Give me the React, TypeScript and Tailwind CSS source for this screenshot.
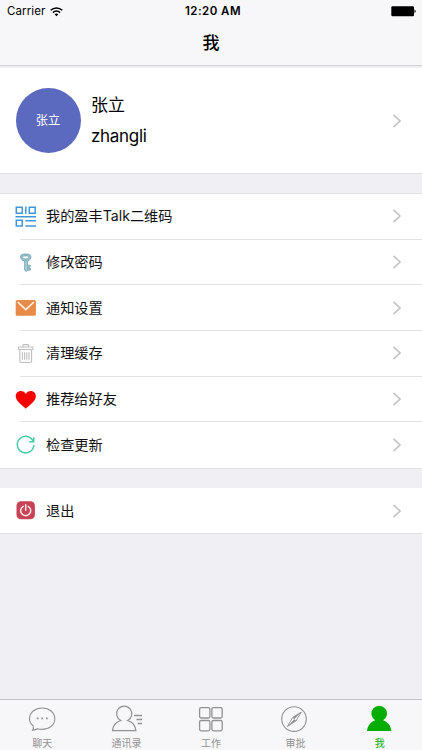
import React from 'react';

interface RowProps {
  icon: React.ReactNode;
  label: string;
  last?: boolean;
}

const Chevron = () => (
  <svg width="10" height="16" viewBox="0 0 10 16" fill="none" stroke="#c4c4c9" strokeWidth="1.7">
    <path d="M1.5 1.9 8 8l-6.5 6.1" />
  </svg>
);

const QrIcon = () => (
  <svg width="22" height="22" viewBox="0 0 22 22" fill="none" stroke="#3f97de" strokeWidth="1.5">
    <path d="M1.3 1.3h5.900v5.900H1.300zM14.300 1.300h5.900v5.900h-5.900zM1.300 14.200h5.900v5.900H1.300zM10.800.5v7.300M.5 10.700h20.500M10.300 14.700h10.700M10.300 20h10.700" />
  </svg>
);

const KeyIcon = () => (
  <svg width="22" height="22" viewBox="0 0 22 22" fill="none">
    <path d="M5.500 4.200C5.800 2.400 8 2 10.700 2s4.900.5 5.200 2.200c.3 2-1.200 4.500-3.400 5v9.100l-1.300 1.300-1.600-1.500V9.200C7 8.700 5.200 6.200 5.500 4.200Z" fill="#8fbfce" stroke="#779fad" strokeWidth=".8" />
    <path d="M7.500 4.700c.6-1 5.800-1 6.400 0 .2 1-1 2.100-1.900 2.100H9.400c-.9 0-2.100-1.100-1.900-2.100Z" fill="#f2fafc" stroke="#779fad" strokeWidth=".6" />
    <path d="M12.500 13.200h2.700v1.600h-1v1.400h1.300v2h-3" fill="#8fbfce" stroke="#779fad" strokeWidth=".7" />
    <path d="M11 9.500v8.500" stroke="#c1dfe7" strokeWidth=".8" />
  </svg>
);

const MailIcon = () => (
  <svg width="22" height="22" viewBox="0 0 22 22" fill="none">
    <rect x=".7" y="3" width="20.200" height="15.800" rx="1.500" fill="#e98b48" />
    <path d="m2.700 5 8.100 7.600L18.900 5" stroke="#fff5eb" strokeWidth="1.500" />
  </svg>
);

const TrashIcon = () => (
  <svg width="22" height="22" viewBox="0 0 22 22" fill="none" stroke="#bfbfbf" strokeWidth="1.100">
    <path d="M4.800 6.500v11.400c0 1 .7 1.600 1.600 1.600h8.600c1 0 1.600-.6 1.600-1.600V6.500M7.400 9.200v7.600M9.600 9.200v7.600M11.800 9.200v7.600M14 9.200v7.600" />
    <rect x="3.500" y="4" width="14.500" height="2.500" rx=".6" />
    <path d="M8 3.800V2.300c0-.4.200-.7.600-.7h4.200c.4 0 .7.300.7.700v1.500" />
  </svg>
);

const HeartIcon = () => (
  <svg width="22" height="22" viewBox="0 0 22 22">
    <path d="M10.800 19.800C9.300 17.400.7 12.900.7 7.200c0-3 2.200-5.300 5-5.300 2.300 0 4.200 1.100 5.100 3.100.9-2 2.800-3.100 5.100-3.100 2.800 0 5 2.300 5 5.300 0 5.700-8.600 10.200-10.100 12.600Z" fill="#f60000" />
  </svg>
);

const RefreshIcon = () => (
  <svg width="22" height="22" viewBox="0 0 22 22" fill="none" stroke="#45cba5" strokeWidth="1.500">
    <path d="M18.200 7.200A8.300 8.300 0 1 0 18.900 11" />
    <path d="M18.700 3.200v4.500h-4.500" />
  </svg>
);

const PowerIcon = () => (
  <svg width="22" height="22" viewBox="0 0 22 22" fill="none">
    <rect x="1.500" y="1.300" width="18.400" height="17.900" rx="4.500" fill="#c74355" />
    <path d="M8.200 6.300a5 5 0 1 0 5 0M10.700 4.700v5.500" stroke="#fde8eb" strokeWidth="1.500" strokeLinecap="round" />
  </svg>
);

const Row = ({ icon, label, last }: RowProps) => (
  <div className="flex h-[45.7px] items-stretch">
    <div className="flex w-[20px] shrink-0 items-center pl-[15px]">
      <div className="shrink-0">{icon}</div>
    </div>
    <div className={`flex flex-1 items-center justify-between pl-[26px] pr-[20px] ${last ? '' : 'border-b border-[#e3e3e6]'}`}>
      <span className="text-[14.2px] leading-5 tracking-[-0.02px] text-[#111]">{label}</span>
      <Chevron />
    </div>
  </div>
);

const rows = [
  { icon: <QrIcon />, label: '我的盈丰Talk二维码' },
  { icon: <KeyIcon />, label: '修改密码' },
  { icon: <MailIcon />, label: '通知设置' },
  { icon: <TrashIcon />, label: '清理缓存' },
  { icon: <HeartIcon />, label: '推荐给好友' },
  { icon: <RefreshIcon />, label: '检查更新' },
];

const ChatIcon = () => (
  <svg width="32" height="28" viewBox="0 0 32 28" fill="none" stroke="currentColor" strokeWidth="1.100">
    <path d="M7.200 20.800C4.800 19 3.500 16.500 3.500 13.700 3.500 7.500 9.200 3 16.200 3S28.800 7.500 28.800 13.700s-5.600 10.700-12.600 10.700c-1.800 0-3.500-.2-5-.7-1.400.8-2.800 1.500-4.600 1.600.8-1.100 1-2.600.6-4.500Z" />
    <path d="M10.700 12.500h1.800v1.800h-1.800zM15.300 12.500h1.800v1.800h-1.800zM19.900 12.500h1.800v1.800h-1.800z" fill="currentColor" stroke="none" />
  </svg>
);

const ContactsIcon = () => (
  <svg width="32" height="28" viewBox="0 0 32 28" fill="none" stroke="currentColor" strokeWidth="1.200">
    <path d="M9.800 15.500a7.600 7.600 0 1 1 6.800 0c4.500 1.300 7.800 4.700 8.300 10.100H1.500c.5-5.400 3.800-8.800 8.300-10.100Z" />
    <path d="M23 10.400h8M25.500 14.500H31M26.700 18.500H31" strokeWidth="1.500" />
  </svg>
);

const WorkIcon = () => (
  <svg width="32" height="28" viewBox="0 0 32 28" fill="none" stroke="currentColor" strokeWidth="1.300">
    <rect x="4.600" y="2.700" width="10.300" height="10.300" rx="1.500" />
    <rect x="16.900" y="2.700" width="10.300" height="10.300" rx="1.500" />
    <rect x="4.600" y="15.500" width="10.300" height="10.300" rx="1.500" />
    <rect x="16.900" y="15.500" width="10.300" height="10.300" rx="1.500" />
  </svg>
);

const CompassIcon = () => (
  <svg width="32" height="28" viewBox="0 0 32 28" fill="none" stroke="currentColor" strokeWidth="1.100">
    <circle cx="15" cy="14.100" r="12.300" />
    <path d="m22.300 7-5.200 8.800-8.700 5.700 5.200-9Z" strokeWidth=".9" />
    <path d="m22.300 7-8.700 5.500 1.700 1.700ZM8.400 21.500l6.900-7.300 1.800 1.600Z" fill="currentColor" stroke="none" />
  </svg>
);

const MeIcon = () => (
  <svg width="32" height="28" viewBox="0 0 32 28">
    <path d="M11.300 15.300A7.800 7.800 0 1 1 19.100 15.300c4.700 1.600 7.700 5.200 8.300 10.800H3c.6-5.600 3.600-9.200 8.300-10.800Z" fill="currentColor" />
  </svg>
);

const tabs = [
  { icon: <ChatIcon />, label: '聊天' },
  { icon: <ContactsIcon />, label: '通讯录' },
  { icon: <WorkIcon />, label: '工作' },
  { icon: <CompassIcon />, label: '审批' },
  { icon: <MeIcon />, label: '我', active: true },
];

export default function App() {
  return (
    <div className="flex h-[750px] w-[422px] flex-col overflow-hidden bg-[#efeff4] font-[Inter,'Noto_Sans_CJK_SC',sans-serif] text-black">
      <header className="h-[66px] shrink-0 border-b border-[#cfcfd4] bg-[#f7f7f9]">
        <div className="grid h-[22px] grid-cols-3 items-center pl-[7px] pr-[6px] text-[11.5px]">
          <div className="flex items-center gap-[5px] pt-px">
            <span className="tracking-[0.1px]">Carrier</span>
            <svg width="13" height="10" viewBox="0 0 13 10" fill="none" stroke="#000" strokeWidth="1.500">
              <path d="M.7 3.200c3.300-3.100 8.300-3.100 11.600 0M2.900 5.600c2.100-2 5.100-2 7.200 0" />
              <path d="M4.600 7.300c1.200-1 2.600-1 3.800 0L6.500 9.200Z" fill="#000" stroke="none" />
            </svg>
          </div>
          <span className="pt-px pl-[3px] text-center font-semibold whitespace-nowrap tracking-[0.45px]">12:20 AM</span>
          <svg className="justify-self-end" width="25" height="11" viewBox="0 0 25 11">
            <rect x=".3" y=".2" width="22.700" height="10" rx="1.200" fill="#000" />
            <path d="M23.500 3.600c1.600.4 1.600 3 0 3.400Z" fill="#000" />
          </svg>
        </div>
        <h1 className="text-center text-[17px] font-medium leading-[43px]">我</h1>
      </header>

      <section className="mt-[2px] flex h-[106px] shrink-0 items-center border-b border-[#e1e1e6] bg-white pl-[15.5px] pr-[20px]">
        <div className="flex size-[65px] shrink-0 items-center justify-center rounded-full bg-[#5b6abf] pt-[2px] text-[12.2px] text-white">张立</div>
        <div className="ml-[10.5px] flex-1 text-[17px] leading-[31px]">
          <p>张立</p>
          <p className="tracking-[-0.3px]">zhangli</p>
        </div>
        <Chevron />
      </section>

      <section className="mt-[19px] shrink-0 border-t border-[#e1e1e6] bg-white">
        {rows.map((row, i) => (
          <Row key={row.label} icon={row.icon} label={row.label} last={i === rows.length - 1} />
        ))}
      </section>

      <section className="mt-[-0.2px] shrink-0 border-t border-[#e1e1e6] pt-[19px]">
        <div className="h-[46px] border-b border-[#e1e1e6] bg-white">
          <Row icon={<PowerIcon />} label="退出" last />
        </div>
      </section>

      <nav className="mt-auto grid h-[51px] shrink-0 grid-cols-5 border-t border-[#c3c3c7] bg-[#f7f7f9]">
        {tabs.map((tab) => (
          <div key={tab.label} className={`flex flex-col items-center pt-[5px] ${tab.active ? 'text-[#06ad06]' : 'text-[#929292]'}`}>
            {tab.icon}
            <span className="mt-[2.5px] text-[10px] leading-[14px]">{tab.label}</span>
          </div>
        ))}
      </nav>
    </div>
  );
}
